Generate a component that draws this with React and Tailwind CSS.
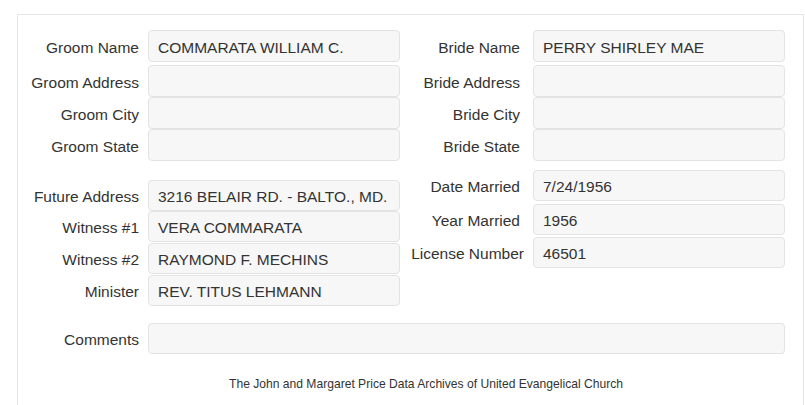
const Field = ({ label, value, labelW, gap, h = 'h-[32px]', mt = '' }) => (
  <div className={`flex items-center ${mt}`}>
    <div className={`${labelW} shrink-0 text-right whitespace-nowrap pt-[3px]`}>{label}</div>
    <div
      className={`${gap} ${h} w-[252px] shrink-0 flex items-center px-[9px] pt-[3px] bg-[#f7f7f7] border border-[#e3e3e3] rounded-[4px] whitespace-nowrap overflow-hidden`}
    >
      {value}
    </div>
  </div>
);

const App = () => {
  return (
    <div className="min-h-screen bg-white text-[#333] text-[15.5px] font-['Liberation_Sans',Arial,sans-serif] pt-[14px] pl-[17px] pr-[1px]">
      <div className="border-t border-l border-r border-[#e5e5e5] pt-[15px] pb-[20px] pr-[18px]">
        <div className="flex">
          {/* Groom side */}
          <div className="w-[382px] shrink-0">
            <Field label="Groom Name" value="COMMARATA WILLIAM C." labelW="w-[121px]" gap="ml-[9px]" />
            <Field label="Groom Address" value="" labelW="w-[121px]" gap="ml-[9px]" mt="mt-[3px]" />
            <Field label="Groom City" value="" labelW="w-[121px]" gap="ml-[9px]" />
            <Field label="Groom State" value="" labelW="w-[121px]" gap="ml-[9px]" />

            <Field label="Future Address" value="3216 BELAIR RD. - BALTO., MD." labelW="w-[121px]" gap="ml-[9px]" h="h-[31px]" mt="mt-[19px]" />
            <Field label="Witness #1" value="VERA COMMARATA" labelW="w-[121px]" gap="ml-[9px]" h="h-[31px]" />
            <Field label="Witness #2" value="RAYMOND F. MECHINS" labelW="w-[121px]" gap="ml-[9px]" h="h-[31px]" mt="mt-[1px]" />
            <Field label="Minister" value="REV. TITUS LEHMANN" labelW="w-[121px]" gap="ml-[9px]" h="h-[31px]" mt="mt-[1px]" />
          </div>

          {/* Bride side */}
          <div className="w-[385px] shrink-0">
            <Field label="Bride Name" value="PERRY SHIRLEY MAE" labelW="w-[120px]" gap="ml-[13px]" />
            <Field label="Bride Address" value="" labelW="w-[120px]" gap="ml-[13px]" mt="mt-[3px]" />
            <Field label="Bride City" value="" labelW="w-[120px]" gap="ml-[13px]" />
            <Field label="Bride State" value="" labelW="w-[120px]" gap="ml-[13px]" />

            <Field label="Date Married" value="7/24/1956" labelW="w-[120px]" gap="ml-[13px]" h="h-[31px]" mt="mt-[9px]" />
            <Field label="Year Married" value="1956" labelW="w-[120px]" gap="ml-[13px]" h="h-[31px]" mt="mt-[3px]" />
            <Field label="License Number" value="46501" labelW="w-[124px]" gap="ml-[9px]" h="h-[31px]" mt="mt-[2px]" />
          </div>
        </div>

        {/* Comments */}
        <div className="flex items-center mt-[17px]">
          <div className="w-[121px] shrink-0 text-right pt-[3px]">Comments</div>
          <div className="ml-[9px] h-[31px] flex-1 bg-[#f7f7f7] border border-[#e3e3e3] rounded-[4px]"></div>
        </div>

        <p className="mt-[22px] text-center text-[12.1px] leading-[16px] pl-[49px]">
          The John and Margaret Price Data Archives of United Evangelical Church
        </p>
      </div>
    </div>
  );
};

export default App;
